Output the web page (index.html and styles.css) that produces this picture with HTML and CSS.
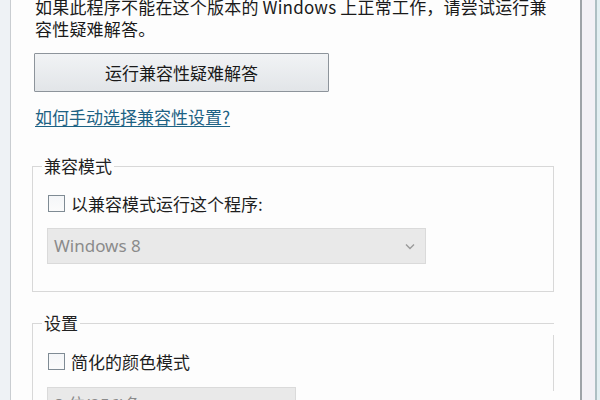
FILE: index.html
```html
<!DOCTYPE html>
<html lang="zh-CN">
<head>
<meta charset="utf-8">
<title>兼容性</title>
<link rel="stylesheet" href="styles.css">
</head>
<body>
<div class="window">
  <div class="edge-left"></div>
  <main class="panel">
    <p class="intro"><span class="line">如果此程序不能在这个版本的 Windows 上正常工作，请尝试运行兼</span><span class="line">容性疑难解答。</span></p>
    <button class="btn" type="button">运行兼容性疑难解答</button>
    <a class="link" href="#">如何手动选择兼容性设置?</a>
    <fieldset class="group group-mode">
      <legend class="legend">兼容模式</legend>
      <label class="check-row"><span class="check"></span><span>以兼容模式运行这个程序:</span></label>
      <div class="select select-wide">
        <span class="select-text">Windows 8</span>
        <svg class="chev" width="10" height="7" viewBox="0 0 10 7"><path d="M1 1.5 L5 5.5 L9 1.5" fill="none" stroke="#9a9a9a" stroke-width="1.4"/></svg>
      </div>
    </fieldset>
    <fieldset class="group group-settings">
      <legend class="legend">设置</legend>
      <label class="check-row row-color"><span class="check"></span><span>简化的颜色模式</span></label>
      <div class="select select-narrow">
        <span class="select-text">8 位(256)色</span>
      </div>
    </fieldset>
  </main>
  <div class="edge-right">
    <div class="band"></div>
    <div class="outer"></div>
  </div>
</div>
</body>
</html>
```
FILE: styles.css
```css
html, body {
  margin: 0;
  padding: 0;
}
body {
  width: 600px;
  height: 400px;
  overflow: hidden;
  background: #fdfdfd;
  font-family: "Noto Sans CJK SC", "Noto Sans", sans-serif;
  font-size: 17px;
  color: #1a1a1a;
}
.window {
  display: flex;
  height: 400px;
}
.edge-left {
  width: 10px;
  flex: none;
  background: #eef2f5;
  border-right: 1px solid #c9cdd1;
}
.panel {
  width: 569px;
  flex: none;
  background: #fdfdfd;
  padding-left: 24px;
  box-sizing: border-box;
  overflow: hidden;
}
.edge-right {
  flex: 1;
  display: flex;
  border-left: 2px solid #9ea3a8;
}
.band {
  width: 13px;
  background: #f3f1f6;
  border-right: 2px solid #aebfc3;
}
.outer {
  flex: 1;
  background: #e3eff2;
}
.intro {
  margin: -4px 0 0 0;
  white-space: nowrap;
  letter-spacing: 0.2px;
}
.line {
  display: block;
  height: 22px;
  line-height: 22px;
}
.btn {
  display: block;
  margin: 13px 0 0 -1px;
  width: 295px;
  height: 39px;
  border: 1px solid #8d949b;
  border-radius: 1px;
  background: linear-gradient(#f1f3f5, #e2e5e8);
  font-family: inherit;
  font-size: 17px;
  color: #1a1a1a;
  padding: 0;
}
.link {
  display: inline-block;
  margin-top: 14px;
  line-height: 22px;
  color: #1d6284;
  text-decoration: underline;
  text-underline-offset: 2px;
}
.group {
  margin: 0 0 0 -3px;
  width: 522px;
  box-sizing: border-box;
  border: 1px solid #d8d8d8;
  padding: 0 0 0 15px;
}
.group-mode {
  margin-top: 26px;
  padding-bottom: 27px;
}
.group-settings {
  margin-top: 20px;
  height: 140px;
  padding-bottom: 0;
  border-right: none;
  padding-right: 1px;
  background: linear-gradient(#d8d8d8, #d8d8d8) right 0 top 11px / 1px 56px no-repeat;
}
.legend {
  margin-left: -6px;
  padding: 0 2px;
  line-height: 22px;
  color: #222;
}
.check-row {
  display: flex;
  align-items: center;
  gap: 6px;
  height: 22px;
  margin-top: 15px;
  color: #1e1e1e;
}
.row-color {
  margin-top: 16px;
}
.check {
  width: 15px;
  height: 15px;
  flex: none;
  border: 1px solid #7f8b94;
  background: linear-gradient(#f4f6f8, #fbfbfb);
}
.select {
  display: flex;
  align-items: center;
  justify-content: space-between;
  box-sizing: border-box;
  height: 36px;
  margin: 14px 0 0 -1px;
  padding: 0 10px 0 6px;
  background: #e9e9e9;
  border: 1px solid #dadada;
  font-family: "Noto Sans", "Noto Sans CJK SC", sans-serif;
  color: #8b8b8b;
}
.select-wide {
  width: 379px;
}
.select-narrow {
  width: 249px;
  margin-top: 15px;
}
.select-text {
  line-height: 22px;
}
.chev {
  display: block;
}
```
